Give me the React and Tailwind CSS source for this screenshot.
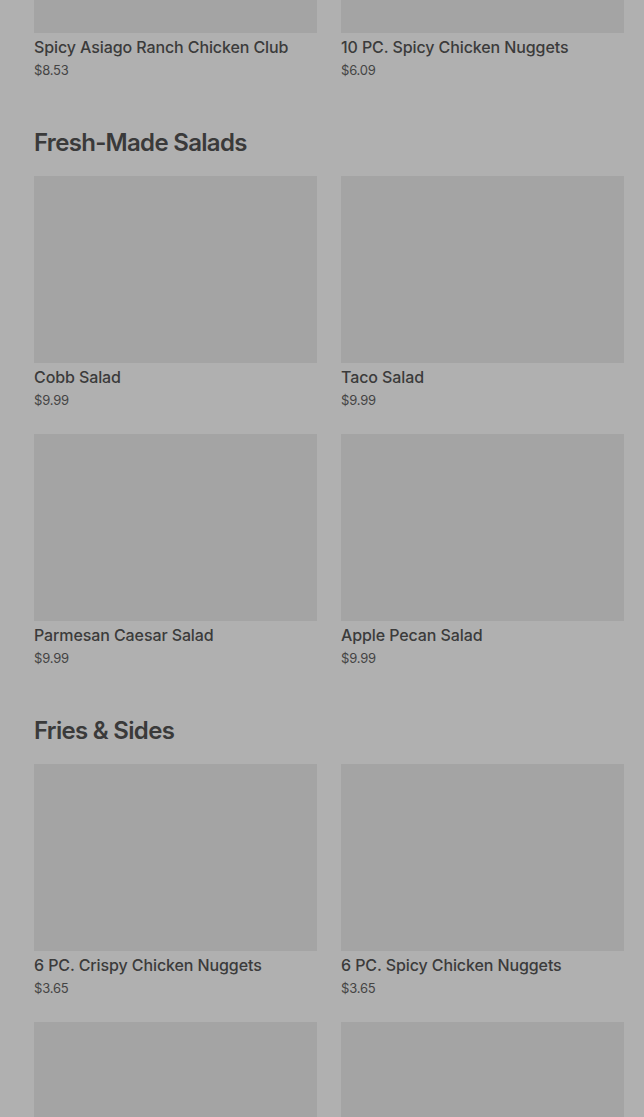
const sections = [
  {
    title: null,
    items: [
      { name: 'Spicy Asiago Ranch Chicken Club', price: '$8.53' },
      { name: '10 PC. Spicy Chicken Nuggets', price: '$6.09' },
    ],
  },
  {
    title: 'Fresh-Made Salads',
    items: [
      { name: 'Cobb Salad', price: '$9.99' },
      { name: 'Taco Salad', price: '$9.99' },
      { name: 'Parmesan Caesar Salad', price: '$9.99' },
      { name: 'Apple Pecan Salad', price: '$9.99' },
    ],
  },
  {
    title: 'Fries & Sides',
    items: [
      { name: '6 PC. Crispy Chicken Nuggets', price: '$3.65' },
      { name: '6 PC. Spicy Chicken Nuggets', price: '$3.65' },
      { name: 'Waffle Potato Fries', price: '$2.85' },
      { name: 'Mac & Cheese', price: '$4.15' },
    ],
  },
];

const MenuCard = ({ item }) => (
  <div className="flex flex-col pb-6">
    <div className="h-[187px] bg-[#a4a4a4]" />
    <p className="pt-[2px] text-[16px] leading-6 font-medium text-[#3b3b3b] tracking-[-0.1px]">
      {item.name}
    </p>
    <p className="mt-[1px] text-[13px] leading-5 text-[#444444] tracking-[-0.2px]">
      {item.price}
    </p>
  </div>
);

const App = () => {
  return (
    <div
      className="h-[1117px] overflow-hidden bg-[#b0b0b0]"
      style={{ fontFamily: 'Inter, "Noto Sans", sans-serif' }}
    >
      <div className="-mt-[154px] pl-[34px] pr-[20px]">
        {sections.map((section, i) => (
          <div key={i}>
            {/* SECTION TITLE */}
            {section.title && (
              <h2 className="pt-[23px] mb-[17px] text-[24px] leading-8 font-semibold tracking-[-0.7px] text-[#3a3a3a]">
                {section.title}
              </h2>
            )}

            {/* ITEMS */}
            <div className="grid grid-cols-2 gap-x-6">
              {section.items.map((item) => (
                <MenuCard key={item.name} item={item} />
              ))}
            </div>
          </div>
        ))}
      </div>
    </div>
  );
};

export default App;
